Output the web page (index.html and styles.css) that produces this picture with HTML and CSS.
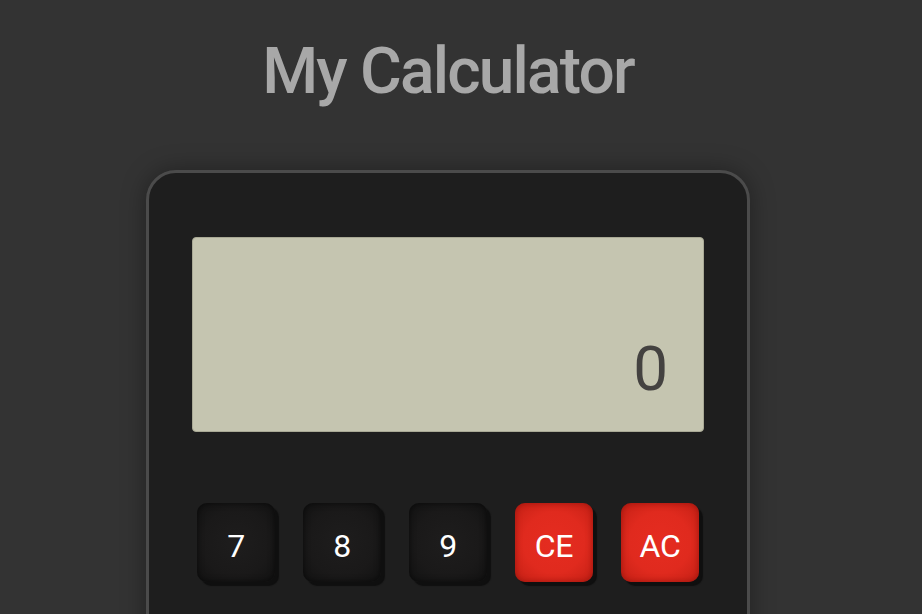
FILE: index.html
```html
<!DOCTYPE html>
<html>
<head>
<meta charset="utf-8">
<title>My Calculator</title>
<link rel="stylesheet" href="styles.css">
</head>
<body>
<div class="page">
  <h1 class="title">My Calculator</h1>
  <div class="calc">
    <div class="display"><span class="value">0</span></div>
    <div class="keys">
      <button class="key">7</button>
      <button class="key">8</button>
      <button class="key">9</button>
      <button class="key red">CE</button>
      <button class="key red">AC</button>
    </div>
  </div>
</div>
</body>
</html>
```

FILE: styles.css
```css
html, body {
  margin: 0;
  padding: 0;
  background: #333333;
  height: 100%;
  overflow: hidden;
}
.page {
  width: 896px;
  display: flex;
  flex-direction: column;
  align-items: center;
  font-family: Roboto, "Liberation Sans", sans-serif;
}
.title {
  margin: 37px 0 0 0;
  font-size: 64px;
  line-height: 70px;
  font-weight: 500;
  color: #a8a8a8;
  letter-spacing: -1.8px;
}
.calc {
  margin-top: 63px;
  width: 598px;
  height: 600px;
  box-sizing: content-box;
  border: 3px solid #4b4b4b;
  border-radius: 30px;
  background: #1e1e1e;
  box-shadow: 0 0 24px rgba(0,0,0,0.35);
  padding: 64px 0 0 0;
  display: flex;
  flex-direction: column;
  align-items: center;
}
.display {
  width: 510px;
  height: 193px;
  background: #c5c5b0;
  border: 1px solid #a9a995;
  border-radius: 4px;
  display: flex;
  align-items: flex-end;
  justify-content: flex-end;
  box-sizing: content-box;
}
.value {
  font-size: 62px;
  line-height: 62px;
  color: #444240;
  margin: 0 35px 31px 0;
  font-weight: 400;
}
.keys {
  margin-top: 71px;
  display: flex;
  gap: 28px;
}
.key {
  width: 78px;
  height: 79px;
  border: none;
  border-radius: 10px;
  background: radial-gradient(circle at 50% 50%, #1e1d1d 0%, #1a1919 60%, #121212 100%);
  box-shadow: inset 0 0 6px rgba(0,0,0,0.6), 4px 4px 1px #0f0f0f;
  color: #ffffff;
  font-family: Roboto, "Liberation Sans", sans-serif;
  font-size: 32px;
  font-weight: 400;
  letter-spacing: -0.3px;
  padding: 6px 0 0 0;
}
.key.red {
  background: radial-gradient(circle at 50% 50%, #e52c20 0%, #e02a1e 55%, #c42015 100%);
  box-shadow: inset 0 0 6px rgba(120,10,5,0.6), 4px 4px 1px #0f0f0f;
}
```
